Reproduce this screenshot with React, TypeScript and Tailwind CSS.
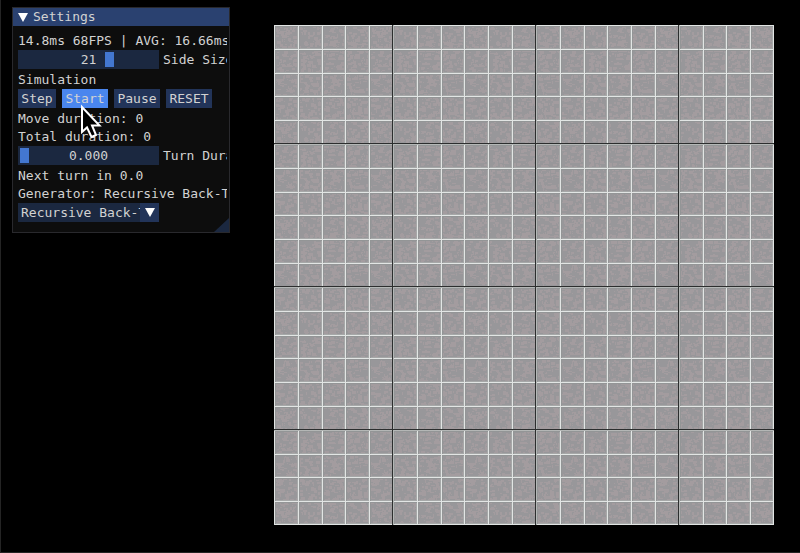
import { useState } from "react";

const CELLS = 21;
const SIZE = 500;
const CHUNK_EDGES = [5, 11, 17];

const textRow = "h-[14px] leading-[16px] whitespace-pre";
const frame = "h-[19px] w-[141px] shrink-0 bg-[#1b2840]";
const button =
  "h-[19px] bg-[#223459] text-center leading-[19px] hover:bg-[#4a86ee]";

type SliderProps = {
  id: string;
  label: string;
  min: number;
  max: number;
  step: number;
  initial: number;
  digits: number;
};

function Slider({ id, label, min, max, step, initial, digits }: SliderProps) {
  const [value, setValue] = useState(initial);
  return (
    <div className="flex h-[19px] gap-1 leading-[19px]">
      <div className={`relative ${frame}`}>
        <input
          id={id}
          type="range"
          min={min}
          max={max}
          step={step}
          value={value}
          onChange={(e) => setValue(Number(e.target.value))}
          className="block h-full w-full appearance-none bg-transparent px-[2px] outline-none [&::-webkit-slider-thumb]:h-[15px] [&::-webkit-slider-thumb]:w-[9px] [&::-webkit-slider-thumb]:appearance-none [&::-webkit-slider-thumb]:bg-[#4377d0]"
        />
        <output
          htmlFor={id}
          className="pointer-events-none absolute inset-0 text-center"
        >
          {value.toFixed(digits)}
        </output>
      </div>
      <label htmlFor={id} className="whitespace-pre">
        {label}
      </label>
    </div>
  );
}

function SettingsWindow() {
  return (
    <section className="relative w-[218px] shrink-0 border border-[#29292d] bg-[#0d0d0d]">
      <header className="flex h-[18px] items-center gap-[5px] bg-[#2a4170] pl-[5px] leading-[18px]">
        <svg viewBox="0 0 10 9" className="h-[9px] w-[10px] fill-white">
          <path d="M0 0H10L5 9Z" />
        </svg>
        <h1>Settings</h1>
      </header>
      <div className="mr-[2px] flex flex-col gap-[3px] overflow-hidden pt-[7px] pb-[10px] pl-[5px]">
        <p className={textRow}>14.8ms 68FPS | AVG: 16.66ms</p>
        <Slider id="side" label="Side Size" min={1} max={31} step={1} initial={21} digits={0} />
        <p className={textRow}>Simulation</p>
        <div className="flex gap-[6px]">
          <button className={`${button} w-[38px]`}>Step</button>
          <button className="h-[19px] w-[46px] bg-[#4a86ee] text-center leading-[19px]">
            Start
          </button>
          <button className={`${button} w-[46px]`}>Pause</button>
          <button className={`${button} w-[46px]`}>RESET</button>
        </div>
        <div className="flex flex-col gap-1">
          <p className={textRow}>Move duration: 0</p>
          <p className={textRow}>Total duration: 0</p>
        </div>
        <Slider id="turn" label="Turn Duration" min={0} max={1} step={0.001} initial={0} digits={3} />
        <div className="flex flex-col gap-1">
          <p className={textRow}>Next turn in 0.0</p>
          <p className={textRow}>Generator: Recursive Back-Tracker</p>
        </div>
        <div className={`relative ${frame}`}>
          <select
            aria-label="Generator"
            className="block h-full w-full appearance-none bg-transparent pr-[19px] pl-[3px] leading-[19px] outline-none"
          >
            <option>Recursive Back-Tracker</option>
          </select>
          <span className="pointer-events-none absolute inset-y-0 right-0 flex w-[19px] items-center justify-center bg-[#223459]">
            <svg viewBox="0 0 10 9" className="h-[9px] w-[10px] fill-white">
              <path d="M0 0H10L5 9Z" />
            </svg>
          </span>
        </div>
      </div>
      <svg viewBox="0 0 15 14" className="absolute right-0 bottom-0 h-[14px] w-[15px] fill-[#1b2840]">
        <path d="M15 0V14H0Z" />
      </svg>
    </section>
  );
}

const PATCH = 96;

// Irregular stone flecks, repeated over the whole floor.
function flecks(): string {
  let seed = 7;
  const next = () => {
    seed = (seed * 16807) % 2147483647;
    return seed / 2147483647;
  };
  let d = "";
  for (let i = 0; i < 1000; i += 1) {
    const x = Math.floor(next() * PATCH);
    const y = Math.floor(next() * PATCH);
    const w = 1 + Math.floor(next() * 4);
    const h = 1 + Math.floor(next() * 3);
    d += `M${x} ${y}h${w}v${h}h-${w}z`;
  }
  return d;
}

function gridLines(edges: number[], offset: number): string {
  const cell = SIZE / CELLS;
  return edges
    .map((i) => {
      const p = Math.min(SIZE - 1, Math.round(i * cell)) + offset + 0.5;
      return `M${p} 0V${SIZE}M0 ${p}H${SIZE}`;
    })
    .join("");
}

function Maze() {
  const edges = Array.from({ length: CELLS + 1 }, (_, i) => i);
  return (
    <svg
      viewBox={`0 0 ${SIZE} ${SIZE}`}
      className="block w-full"
      shapeRendering="crispEdges"
      role="img"
      aria-label="Maze grid"
    >
      <defs>
        <pattern id="stone" width={PATCH} height={PATCH} patternUnits="userSpaceOnUse">
          <rect width={PATCH} height={PATCH} fill="#98979a" />
          <path d={flecks()} fill="#a39c9f" />
        </pattern>
      </defs>
      <rect width={SIZE} height={SIZE} fill="url(#stone)" />
      <path d={gridLines(edges, -1)} stroke="#a6a8a8" />
      <path d={gridLines(edges, 1)} stroke="#939596" />
      <path d={gridLines(edges, 0)} stroke="#e2e5e4" />
      <path d={gridLines(CHUNK_EDGES, 0)} stroke="#b4b7b6" />
      <path d={gridLines(CHUNK_EDGES, -1)} stroke="#2c2e2e" />
    </svg>
  );
}

export default function App() {
  return (
    <div className="relative flex min-h-screen items-start gap-[44px] border-b border-l border-[#242424] bg-black pt-[7px] pr-[26px] pl-[11px] font-['DejaVu_Sans_Mono','Liberation_Mono',monospace] text-[13px] text-[#d2d2d2]">
      <SettingsWindow />
      <main className="min-w-0 flex-1 pt-[18px]">
        <Maze />
      </main>
      <svg
        viewBox="0 0 22 36"
        className="pointer-events-none absolute top-[104px] left-[79px] h-[36px] w-[22px]"
      >
        <path
          d="M2 3V28L7 23.5L11.5 33L16 31L12 21.5H19.5Z"
          fill="#000"
          stroke="#fff"
          strokeWidth="2"
        />
      </svg>
    </div>
  );
}
